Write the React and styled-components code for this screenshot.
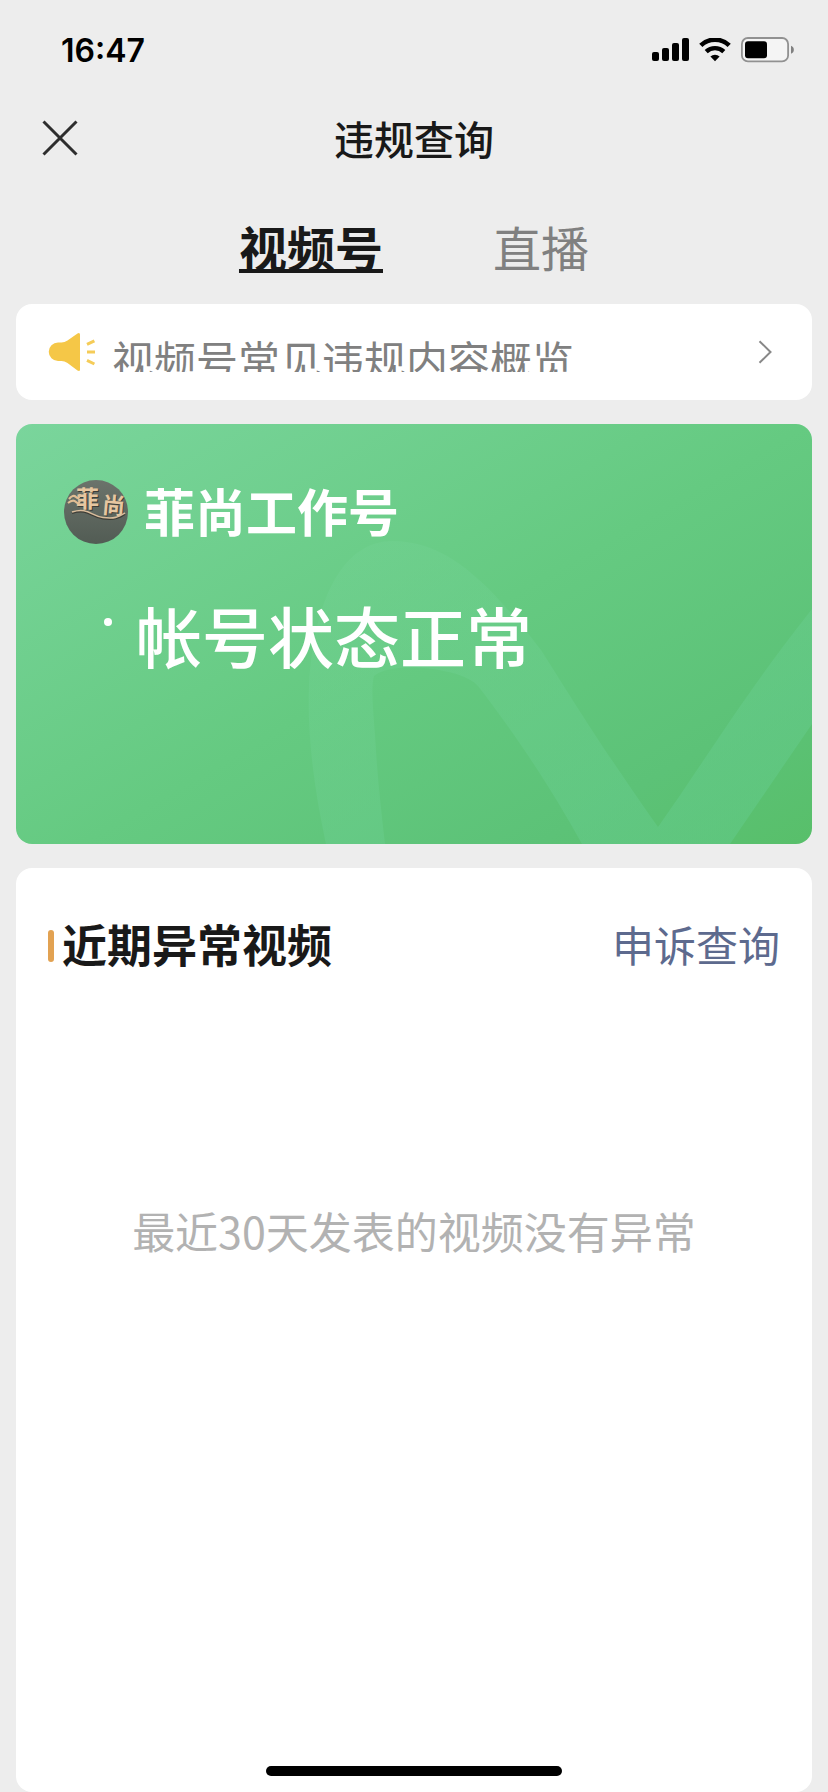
import React, { useState } from 'react';
import styled, { createGlobalStyle } from 'styled-components';

const GlobalStyle = createGlobalStyle`
  * {
    box-sizing: border-box;
  }
  body {
    margin: 0;
    background-color: #ededed;
    color: #191919;
    font-family: "Noto Sans CJK SC", "Noto Sans", sans-serif;
  }
  button {
    padding: 0;
    border: none;
    background: none;
    color: inherit;
    font: inherit;
    cursor: pointer;
  }
`

const Page = styled.div`
  display: flex;
  flex-direction: column;
  min-height: 100vh;
`

const StatusBar = styled.div`
  display: flex;
  align-items: center;
  justify-content: space-between;
  height: 100px;
  padding: 0 33px 0 61px;
  color: #000;
`

const Time = styled.span`
  font-family: Inter, sans-serif;
  font-size: 32px;
  font-weight: 600;
`

const StatusIcons = styled.div`
  display: flex;
  align-items: center;
  gap: 10px;
`

const NavBar = styled.header`
  display: grid;
  grid-template-columns: 80px 1fr 80px;
  align-items: center;
  height: 76px;
`

const CloseButton = styled.button`
  display: flex;
  justify-content: flex-end;
  padding-right: 2px;
`

const Title = styled.h1`
  margin: 0;
  font-size: 40px;
  font-weight: 500;
  line-height: 60px;
  text-align: center;
`

const Tabs = styled.nav`
  display: flex;
  justify-content: center;
  gap: 110px;
  padding: 34px 0 22px;
`

const Tab = styled.button`
  font-size: 48px;
  line-height: 72px;
  font-weight: ${({$active}) => $active ? 700 : 400};
  color: ${({$active}) => $active ? '#191919' : '#808080'};
  text-decoration: ${({$active}) => $active ? 'underline' : 'none'};
  text-decoration-thickness: 4px;
  text-decoration-skip-ink: none;
  text-underline-offset: 2px;
`

const Main = styled.main`
  flex: 1;
  display: flex;
  flex-direction: column;
  gap: 24px;
  padding: 0 16px;
`

const Notice = styled.a`
  display: flex;
  align-items: center;
  height: 96px;
  padding: 0 40px 0 32px;
  border-radius: 16px;
  background-color: #fff;
  color: #808080;
  text-decoration: none;
`

/* one line only, anything taller than the row is cut off */
const NoticeText = styled.span`
  flex: 1;
  height: 40px;
  margin-left: 16px;
  overflow: hidden;
  font-size: 42px;
  line-height: 54px;
  white-space: nowrap;
`

const StatusCard = styled.section`
  position: relative;
  height: 420px;
  padding: 56px 48px;
  overflow: hidden;
  border-radius: 16px;
  background: linear-gradient(150deg, #7ad59c 0%, #65ca81 52%, #5cc277 82%, #58bf6a 100%);
  color: #fff;
`

const Watermark = styled.svg`
  position: absolute;
  inset: 0;
  width: 100%;
  height: 100%;
`

const Account = styled.div`
  position: relative;
  display: flex;
  align-items: center;
  gap: 16px;
  height: 64px;
`

const AccountName = styled.span`
  padding-bottom: 4px;
  font-size: 51px;
  font-weight: 700;
  line-height: 60px;
`

const State = styled.div`
  position: relative;
  display: flex;
  gap: 24px;
  margin-top: 54px;
  padding-left: 40px;
`

const Dot = styled.span`
  width: 8px;
  height: 8px;
  margin-top: 20px;
  border-radius: 50%;
  background-color: #fff;
`

const StateText = styled.h2`
  margin: 0;
  font-size: 66px;
  font-weight: 500;
  line-height: 72px;
`

const Panel = styled.section`
  flex: 1;
  padding: 44px 32px;
  border-radius: 16px;
  background-color: #fff;
`

const PanelHeader = styled.div`
  display: flex;
  align-items: center;
  justify-content: space-between;
  height: 64px;
`

const PanelTitle = styled.h2`
  display: flex;
  align-items: center;
  gap: 8px;
  margin: 0;
  font-size: 45px;
  font-weight: 700;
  line-height: 64px;
  &::before {
    content: "";
    width: 6px;
    height: 32px;
    margin-top: 4px;
    border-radius: 3px;
    background-color: #e2a252;
  }
`

const AppealLink = styled.a`
  font-size: 42px;
  line-height: 64px;
  color: #5d6a8e;
  text-decoration: none;
`

const Empty = styled.p`
  margin: 222px 0 0;
  font-size: 43px;
  line-height: 64px;
  text-align: center;
  color: #b2b2b2;
`

const HomeIndicator = styled.div`
  position: fixed;
  bottom: 16px;
  left: 50%;
  width: 296px;
  height: 10px;
  margin-left: -148px;
  border-radius: 5px;
  background-color: #000;
`

const Signal = () => (
  <svg width="37" height="24" viewBox="0 0 37 24" aria-hidden="true">
    <rect x="0" y="14" width="7" height="9" rx="2"/>
    <rect x="10" y="10" width="7" height="13" rx="2"/>
    <rect x="20" y="5" width="7" height="18" rx="2"/>
    <rect x="30" y="0" width="7" height="23" rx="2"/>
  </svg>
)

const Wifi = () => (
  <svg width="32" height="24" viewBox="0 0 32 24" fill="none" stroke="#000" aria-hidden="true">
    <path d="M1.8 7.4a20.5 20.5 0 0 1 28.4 0" strokeWidth="4.6"/>
    <path d="M7.2 13.6a12.8 12.8 0 0 1 17.6 0" strokeWidth="4.4"/>
    <path d="M16 23.2l-4.6-4.6a6.6 6.6 0 0 1 9.2 0z" fill="#000" stroke="none"/>
  </svg>
)

const Battery = () => (
  <svg width="54" height="26" viewBox="0 0 54 26" fill="none" aria-hidden="true">
    <rect x="0.9" y="1" width="46.2" height="23.4" rx="6" fill="#f4f4f4" stroke="#919191" strokeWidth="1.8"/>
    <rect x="4" y="4.2" width="22" height="17" rx="3" fill="#000"/>
    <path d="M50 8.8c3.8 1.2 3.8 6.8 0 8z" fill="#808080"/>
  </svg>
)

const Megaphone = () => (
  <svg width="48" height="40" viewBox="0 0 48 40" aria-hidden="true">
    <path d="M10 10.5h3.5q3 0 6-2L29.5 1.4q2.5-1.2 2.5 1.2v34.8q0 2.4-2.5 1.2L19.5 31q-3-2-6-2H10a9.2 9.2 0 0 1 0-18.5z" fill="#f5c747"/>
    <path d="M39 12.4l7.4-3.6M39 20h8M39 28.4l7.4 3.6" stroke="#f5cc58" strokeWidth="3" fill="none"/>
  </svg>
)

const Avatar = () => (
  <svg width="64" height="64" viewBox="0 0 64 64" aria-hidden="true">
    <defs>
      <linearGradient id="wall" x1="0" y1="0" x2="0" y2="1">
        <stop offset="0" stopColor="#6b736b"/>
        <stop offset="1" stopColor="#525c54"/>
      </linearGradient>
    </defs>
    <circle cx="32" cy="32" r="32" fill="url(#wall)"/>
    <g fontFamily="Noto Sans CJK SC, sans-serif" fontWeight="700">
      <text x="13" y="28" fontSize="23" fill="#3c3c36">菲</text>
      <text x="12" y="27" fontSize="23" fill="#e6c6a0">菲</text>
      <text x="39" y="35" fontSize="23" fill="#3c3c36" transform="rotate(5 50 27)">尚</text>
      <text x="38" y="34" fontSize="23" fill="#e6c6a0" transform="rotate(5 50 27)">尚</text>
    </g>
    <path d="M5 19q4-5 7-2t4-3M4 23q5-4 8-1t4-2" fill="none" stroke="#e0bd94" strokeWidth="2.2"/>
    <path d="M8 33C24 28 27 37 39 38.5S54 38 61 34" fill="none" stroke="#3c3c36" strokeWidth="2"/>
    <path d="M8 32C24 27 27 36 39 37.5S54 37 61 33" fill="none" stroke="#d9bd9c" strokeWidth="1.6"/>
  </svg>
)

function App() {
  const [tab, setTab] = useState('video');

  return (
    <>
      <GlobalStyle/>
      <Page>
        <StatusBar>
          <Time>16:47</Time>
          <StatusIcons>
            <Signal/>
            <Wifi/>
            <Battery/>
          </StatusIcons>
        </StatusBar>
        <NavBar>
          <CloseButton aria-label="关闭">
            <svg width="36" height="36" viewBox="0 0 36 36" fill="none" stroke="#2e2e2e" strokeWidth="3">
              <path d="M1.5 1.5l33 33M34.5 1.5l-33 33"/>
            </svg>
          </CloseButton>
          <Title>违规查询</Title>
        </NavBar>
        <Tabs>
          <Tab $active={tab === 'video'} onClick={() => setTab('video')}>视频号</Tab>
          <Tab $active={tab === 'live'} onClick={() => setTab('live')}>直播</Tab>
        </Tabs>
        <Main>
          <Notice href="#overview">
            <Megaphone/>
            <NoticeText>视频号常见违规内容概览</NoticeText>
            <svg width="14" height="24" viewBox="0 0 14 24" fill="none" stroke="#888" strokeWidth="2" aria-hidden="true">
              <path d="M1.5 1.2L12.5 12 1.5 22.8"/>
            </svg>
          </Notice>

          <StatusCard>
            <Watermark viewBox="0 0 796 420" preserveAspectRatio="xMaxYMax slice" aria-hidden="true">
              <defs>
                <linearGradient id="band" x1="0" y1="0" x2="1" y2="1">
                  <stop offset="0" stopColor="#7bd69c" stopOpacity="0.22"/>
                  <stop offset="1" stopColor="#62cb8c" stopOpacity="0.5"/>
                </linearGradient>
              </defs>
              <path
                fill="url(#band)"
                d="M310 420C298 365 291 310 293 262C298 170 330 117 376 117C430 117 470 155 525 226C550 265 580 315 642 403C690 335 730 268 796 185V300L714 420H566C530 355 495 305 462 262C448 244 375 236 358 252C355 262 357 285 359 310C361 350 365 385 369 420Z"
              />
            </Watermark>
            <Account>
              <Avatar/>
              <AccountName>菲尚工作号</AccountName>
            </Account>
            <State>
              <Dot/>
              <StateText>帐号状态正常</StateText>
            </State>
          </StatusCard>

          <Panel>
            <PanelHeader>
              <PanelTitle>近期异常视频</PanelTitle>
              <AppealLink href="#appeal">申诉查询</AppealLink>
            </PanelHeader>
            <Empty>最近30天发表的视频没有异常</Empty>
          </Panel>
        </Main>
        <HomeIndicator/>
      </Page>
    </>
  )
}

export default App
